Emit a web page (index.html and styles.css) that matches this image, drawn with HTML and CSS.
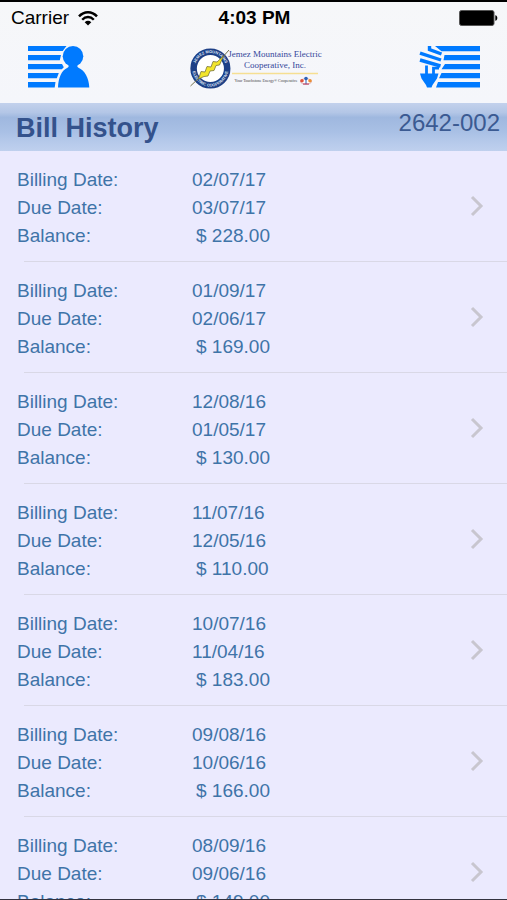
FILE: index.html
```html
<!doctype html>
<html lang="en">
<head>
    <meta charset="UTF-8" />
    <meta name="viewport" content="width=device-width, initial-scale=1.0" />
    <title>Bill History</title>
    <link rel="stylesheet" href="styles.css">
</head>
<body>

    <div class="status-bar">
        <div class="carrier">
            <span>Carrier</span>
            <svg width="20" height="15" viewBox="0 0 20 15" aria-hidden="true">
                <g fill="none" stroke="#000" stroke-width="2.4">
                    <path d="M1 5.4C6-.2 14-.2 19 5.4" />
                    <path d="M4.2 8.7c3.4-3.6 8.2-3.6 11.6 0" />
                </g>
                <path d="M6.7 11.2c2-1.9 4.6-1.9 6.6 0L10 14.6z" />
            </svg>
        </div>
        <span class="time">4:03 PM</span>
        <div class="battery">
            <svg width="39" height="16" viewBox="0 0 39 16" aria-hidden="true">
                <rect x=".5" y=".5" width="34.5" height="15" rx="2" stroke="#555" />
                <path d="M36.3 5.2c1.4.3 2 1.4 2 2.8s-.6 2.5-2 2.8z" />
            </svg>
        </div>
    </div>

    <nav class="nav-bar">
        <a href="#account" class="nav-link" aria-label="Account">
            <svg width="62" height="42" viewBox="0 0 62 42" fill="#007aff" aria-hidden="true">
                <path d="M0 0h38.5l-3.8 5H0zM0 9h33l-1.2 5.2H0zM0 18h34l1.8 3.2-2 2H0zM0 27h30.8l-2 5.2H0zM0 36h27.5l-.8 5.500H0z" />
                <circle cx="45" cy="10.300" r="10.300" />
                <path d="M30 41.500c.4-10 3.500-17 9.500-19.800 1.500-.7 1.500-2.200.5-3.700h10c-1 1.500-1 3 .5 3.700C56.500 24.500 61 31.500 61.300 41.500z" />
            </svg>
        </a>
        <svg class="logo" width="132" height="46" viewBox="1 -1 132 46" aria-hidden="true">
            <defs>
                <path id="ring-top" d="M6.800 23.500a15.600 15.600 0 0 1 31.200 0" />
                <path id="ring-bottom" d="M4.400 23.500a18 18 0 0 0 36 0" />
            </defs>
            <circle cx="22.400" cy="23.500" r="16.800" fill="#fff" stroke="#1d3f86" stroke-width="6.500" />
            <text class="ring-text"><textPath href="#ring-top" startOffset="50%">JEMEZ MOUNTAINS</textPath></text>
            <text class="ring-text"><textPath href="#ring-bottom" startOffset="50%">ELECTRIC COOPERATIVE</textPath></text>
            <path d="M2.500 41L12 32M33 14l8-9" stroke="#75734e" stroke-width="1" />
            <path d="M10.500 34l2.500-7.500 4 .5 2-5.500 4 .5 2-5.500 4 .5 6.500-6-4 9-3.500.5-2 5-4 .5-2 5-4 .5z" fill="#f2e52b" stroke="#77733a" stroke-width=".8" />
            <text class="logo-name" x="87" y="12">Jemez Mountains Electric</text>
            <text class="logo-name" x="87" y="23">Cooperative, Inc.</text>
            <path d="M44 28.500h86" stroke="#f6df92" stroke-width="1.600" />
            <text class="logo-tag" x="78" y="37">Your Touchstone Energy® Cooperative</text>
            <g>
                <ellipse cx="118" cy="36.500" rx="5.500" ry="2.800" fill="#fff" stroke="#c98a94" stroke-width=".6" />
                <circle cx="114" cy="35.700" r="1.800" fill="#e0523c" />
                <circle cx="118" cy="33.500" r="1.800" fill="#2d62b5" />
                <circle cx="122" cy="35.700" r="1.800" fill="#ec8e35" />
                <path d="M118 33v6" stroke="#2d62b5" />
                <path d="M115 39h6" stroke="#b52f55" />
            </g>
        </svg>
        <a href="#usage" class="nav-link" aria-label="Energy usage">
            <svg width="62" height="42" viewBox="0 0 62 42" fill="#007aff" aria-hidden="true">
                <path d="M16 0h45v5.200H22.500zM25.500 9H61v5.200H24.500zM26 18h35v5.200H22.500zM22.500 27H61v5.200H20zM19 36h42v5.500H17z" />
                <g fill="none" stroke="#007aff" stroke-width="3.400">
                    <path d="M10.500 0v3.600L22.500 8" />
                    <path d="M1 7.200L22 14" />
                    <path d="M1 14L21.500 20" />
                    <path d="M7.500 19.500v9M20 22.200h-5.500v6" stroke-width="2.800" />
                </g>
                <path d="M1 27.500h18.500l-1.500 5-4.500 6.500-1 2.500H8L7 39l-4.500-6.500z" />
            </svg>
        </a>
    </nav>

    <header class="title-bar">
        <h1>Bill History</h1>
        <span class="account">2642-002</span>
    </header>

    <main class="bills">
        <a class="bill" href="#bill-0217">
            <dl>
                <dt>Billing Date:</dt><dd>02/07/17</dd>
                <dt>Due Date:</dt><dd>03/07/17</dd>
                <dt>Balance:</dt><dd class="amount">$ 228.00</dd>
            </dl>
            <svg class="chevron" width="14" height="22" viewBox="0 0 14 22" aria-hidden="true"><path d="M2 2l9 9-9 9" /></svg>
        </a>
        <a class="bill" href="#bill-0117">
            <dl>
                <dt>Billing Date:</dt><dd>01/09/17</dd>
                <dt>Due Date:</dt><dd>02/06/17</dd>
                <dt>Balance:</dt><dd class="amount">$ 169.00</dd>
            </dl>
            <svg class="chevron" width="14" height="22" viewBox="0 0 14 22" aria-hidden="true"><path d="M2 2l9 9-9 9" /></svg>
        </a>
        <a class="bill" href="#bill-1216">
            <dl>
                <dt>Billing Date:</dt><dd>12/08/16</dd>
                <dt>Due Date:</dt><dd>01/05/17</dd>
                <dt>Balance:</dt><dd class="amount">$ 130.00</dd>
            </dl>
            <svg class="chevron" width="14" height="22" viewBox="0 0 14 22" aria-hidden="true"><path d="M2 2l9 9-9 9" /></svg>
        </a>
        <a class="bill" href="#bill-1116">
            <dl>
                <dt>Billing Date:</dt><dd>11/07/16</dd>
                <dt>Due Date:</dt><dd>12/05/16</dd>
                <dt>Balance:</dt><dd class="amount">$ 110.00</dd>
            </dl>
            <svg class="chevron" width="14" height="22" viewBox="0 0 14 22" aria-hidden="true"><path d="M2 2l9 9-9 9" /></svg>
        </a>
        <a class="bill" href="#bill-1016">
            <dl>
                <dt>Billing Date:</dt><dd>10/07/16</dd>
                <dt>Due Date:</dt><dd>11/04/16</dd>
                <dt>Balance:</dt><dd class="amount">$ 183.00</dd>
            </dl>
            <svg class="chevron" width="14" height="22" viewBox="0 0 14 22" aria-hidden="true"><path d="M2 2l9 9-9 9" /></svg>
        </a>
        <a class="bill" href="#bill-0916">
            <dl>
                <dt>Billing Date:</dt><dd>09/08/16</dd>
                <dt>Due Date:</dt><dd>10/06/16</dd>
                <dt>Balance:</dt><dd class="amount">$ 166.00</dd>
            </dl>
            <svg class="chevron" width="14" height="22" viewBox="0 0 14 22" aria-hidden="true"><path d="M2 2l9 9-9 9" /></svg>
        </a>
        <a class="bill" href="#bill-0816">
            <dl>
                <dt>Billing Date:</dt><dd>08/09/16</dd>
                <dt>Due Date:</dt><dd>09/06/16</dd>
                <dt>Balance:</dt><dd class="amount">$ 149.00</dd>
            </dl>
            <svg class="chevron" width="14" height="22" viewBox="0 0 14 22" aria-hidden="true"><path d="M2 2l9 9-9 9" /></svg>
        </a>
    </main>

</body>
</html>
```
FILE: styles.css
```css
* {
    box-sizing: border-box;
}
body {
    font-family: "Liberation Sans", Arial, sans-serif;
    font-size: 19px;
    margin: 0;
    height: 100vh;
    display: flex;
    flex-direction: column;
    overflow: hidden;
    background: linear-gradient(#f6f7f9, #f5f6fb 104px);
    border-top: 2px solid #000;
    border-bottom: 1px solid #33333f;
}
.status-bar {
    display: grid;
    grid-template-columns: 1fr auto 1fr;
    align-items: center;
    flex: none;
    height: 32px;
    padding: 0 9px 0 11px;
    color: #000;
}
.carrier {
    display: flex;
    align-items: center;
    gap: 9px;
}
.time {
    font-weight: bold;
}
.battery {
    display: flex;
    justify-content: flex-end;
}
.nav-bar {
    display: flex;
    align-items: center;
    justify-content: space-between;
    flex: none;
    height: 69px;
    padding: 0 26px 4px 28px;
}
.nav-link {
    display: flex;
}
.logo {
    overflow: visible;
}
.ring-text {
    font-family: "Liberation Sans", Arial, sans-serif;
    font-size: 4px;
    font-weight: bold;
    fill: #dfe6f5;
    text-anchor: middle;
}
.logo-name {
    font-family: "Liberation Serif", "Times New Roman", serif;
    font-size: 9px;
    fill: #35479a;
    text-anchor: middle;
}
.logo-tag {
    font-family: "Liberation Serif", "Times New Roman", serif;
    font-size: 4px;
    fill: #444;
    text-anchor: middle;
}
.title-bar {
    display: flex;
    justify-content: space-between;
    align-items: flex-start;
    flex: none;
    height: 48px;
    padding: 6px 7px 0 16px;
    background: linear-gradient(#c3d1ec, #b3c6e6 20%, #9fb8df 30%, #a9c0e5 60%, #b5c9ea 80%, #bfd0ee);
    color: #3b5a92;
}
.title-bar h1 {
    margin: 0;
    font-size: 27px;
    line-height: 38px;
    color: #34528c;
}
.account {
    font-size: 24px;
    line-height: 28px;
}
.bills {
    flex: 1;
    min-height: 0;
    overflow-y: auto;
    scrollbar-width: none;
    background: #ebeafe;
}
.bill {
    display: flex;
    align-items: center;
    justify-content: space-between;
    height: 111px;
    padding: 0 23px 0 17px;
    color: #3f74a8;
    text-decoration: none;
    background: linear-gradient(#d9d8e6, #d9d8e6) 24px 100% / 100% 1px no-repeat;
}
.bill dl {
    display: grid;
    grid-template-columns: 175px auto;
    margin: 0;
    padding-top: 2px;
    line-height: 28px;
}
.bill dd {
    margin: 0;
}
.bill .amount {
    padding-left: 4px;
}
.chevron {
    margin-bottom: 2px;
    fill: none;
    stroke: #c8c6cf;
    stroke-width: 3px;
}
```
